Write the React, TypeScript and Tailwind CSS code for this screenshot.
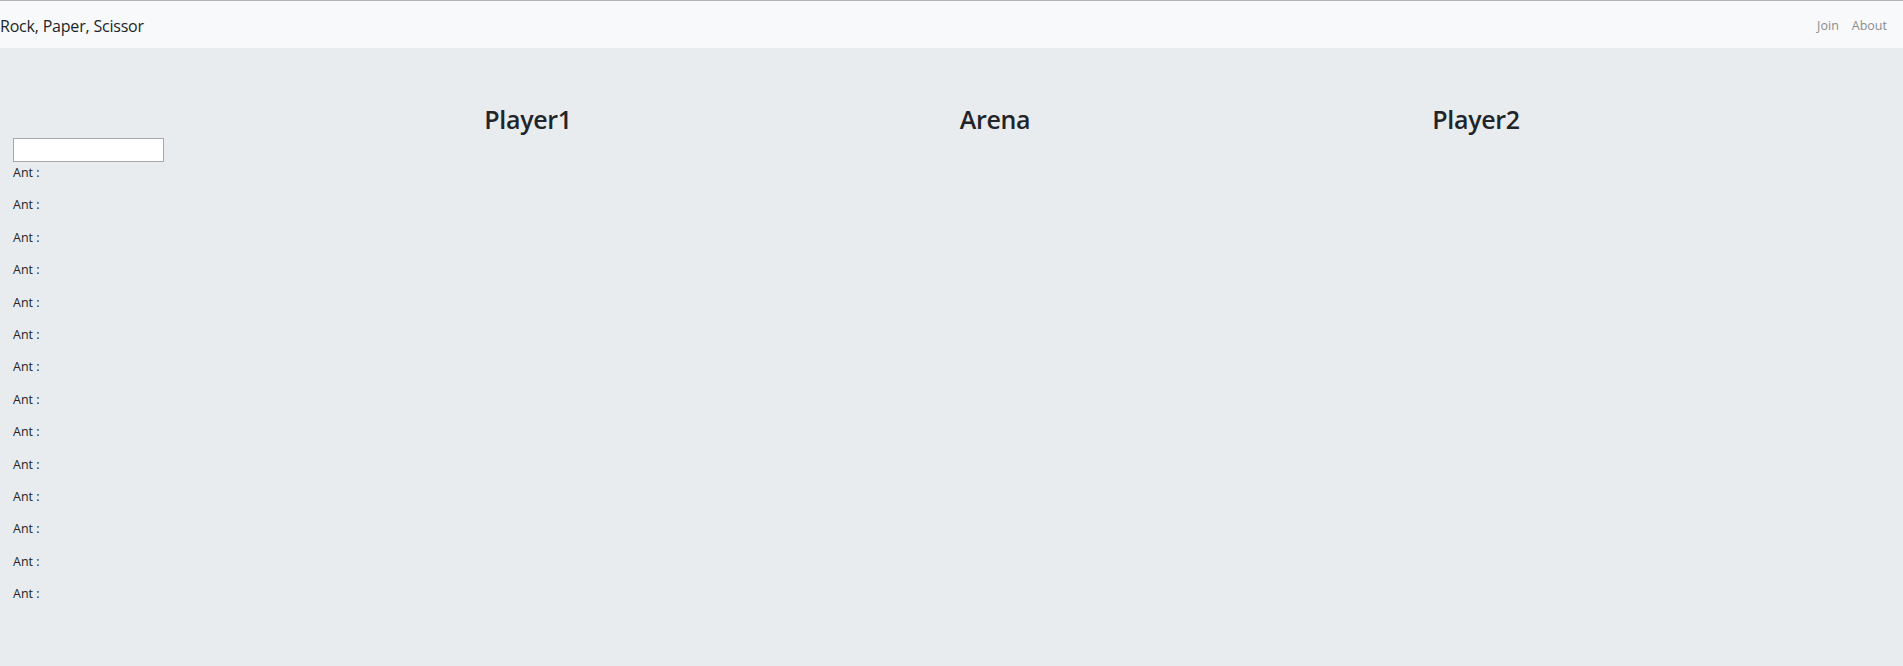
export default function App() {
  const ants = Array.from({ length: 14 }, (_, i) => i);

  return (
    <div className="min-h-[666px] bg-[#e9ecef] text-[#212529]" style={{ fontFamily: '"Open Sans", "Noto Sans", sans-serif' }}>
      <nav className="flex h-[48px] items-center justify-between border-t border-[#b4b4b4] bg-[#f8f9fa] pt-[4px]">
        <span className="-mt-[2px] text-[16px] tracking-[-0.2px]">Rock, Paper, Scissor</span>
        <div className="flex gap-[13px] pr-[16px] text-[12.5px] text-[#8a8d90]">
          <span>Join</span>
          <span>About</span>
        </div>
      </nav>

      <div className="grid grid-cols-[294px_468px_466px_496px] pt-[53px]">
        <div />
        <h2 className="text-center text-[25px] font-semibold leading-[36px] tracking-[-0.3px]">Player1</h2>
        <h2 className="text-center text-[25px] font-semibold leading-[36px] tracking-[-0.3px]">Arena</h2>
        <h2 className="text-center text-[25px] font-semibold leading-[36px] tracking-[-0.3px]">Player2</h2>
      </div>

      <div className="px-[13px] pt-[1px]">
        <input type="text" className="block h-[24px] w-[151px] border border-[#a9a9a9] bg-white" />
        <ul className="pt-[3px]">
          {ants.map((a) => (
            <li key={a} className="mb-[16px] text-[12.5px] leading-[16.4px]">
              Ant :
            </li>
          ))}
        </ul>
      </div>
    </div>
  );
}
